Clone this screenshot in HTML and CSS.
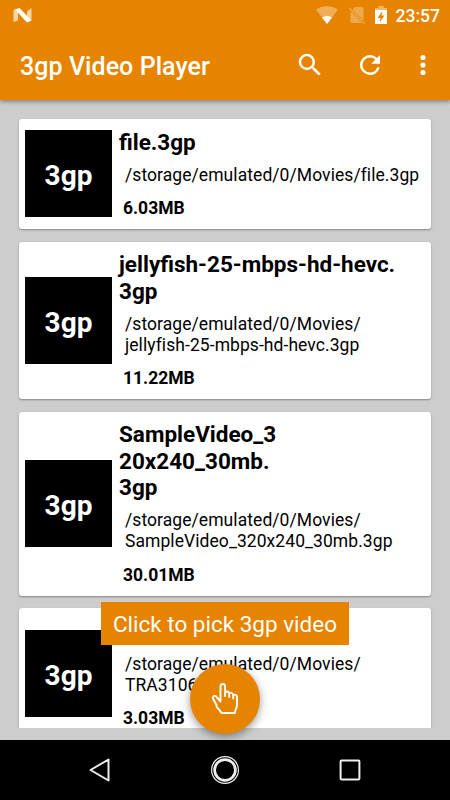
FILE: index.html
```html
<!DOCTYPE html>
<html lang="en">
<head>
<meta charset="utf-8">
<title>3gp Video Player</title>
<link rel="stylesheet" href="styles.css">
</head>
<body>
<div class="screen">
  <header class="header">
    <div class="status">
      <svg class="status-logo" width="20" height="16" viewBox="0 0 20 16"><path d="M.5 2 5 .5V12.5L.5 14zM14 3.500 18.500 0V12.500L14 14z" fill="#fff" opacity=".65"/><path d="M2 1.500 6.500 0 18.500 12.500 14 14.500z" fill="#fff"/></svg>
      <div class="status-icons">
        <svg width="22" height="18" viewBox="0 0 22 18"><path d="M11 18 0 3.500Q11-3.500 22 3.500z" fill="#fff" opacity=".35"/><path d="M11 18 6 11.500Q11 8.500 16 11.500z" fill="#fff"/></svg>
        <svg class="sim" width="16" height="18" viewBox="0 0 16 18"><path d="M6 1H13Q14.500 1 14.500 2.500V14.500L3.500 3.500zM1.500 5 13 17H3Q1.500 17 1.500 15.500z" fill="#fff" opacity=".3"/><path d="M.3 2 15.500 17.500" stroke="#fff" stroke-width="1.200" opacity=".35"/></svg>
        <svg class="battery" width="12" height="18" viewBox="0 0 12 18"><path d="M0 4V2H3.500V0H8.500V2H12V4z" fill="#fff" opacity=".4"/><path fill-rule="evenodd" d="M0 4H12V18H0zM7.500 5 2.500 12H5.500L4.500 16.500 9.500 9.500H6.500z" fill="#fff"/></svg>
        <span class="clock">23:57</span>
      </div>
    </div>
    <div class="toolbar">
      <h1 class="title">3gp Video Player</h1>
      <svg class="search" width="30" height="30" viewBox="0 0 24 24" fill="#fff"><path d="M15.500 14h-.79l-.28-.27A6.470 6.470 0 0 0 16 9.500 6.500 6.500 0 1 0 9.500 16c1.610 0 3.090-.59 4.230-1.570l.27.28v.79l5 4.990L20.490 19l-4.990-5zm-6 0C7.010 14 5 11.990 5 9.500S7.010 5 9.500 5 14 7.010 14 9.500 11.990 14 9.500 14z"/></svg>
      <svg class="refresh" width="30" height="30" viewBox="0 0 24 24" fill="#fff"><path d="M17.650 6.350A7.958 7.958 0 0 0 12 4a8 8 0 1 0 7.730 10h-2.080A5.990 5.990 0 0 1 12 18a6 6 0 1 1 0-12c1.660 0 3.140.69 4.220 1.780L13 11h7V4l-2.350 2.350z"/></svg>
      <svg class="more" width="30" height="30" viewBox="0 0 24 24" fill="#fff"><circle cx="12" cy="6" r="2.050"/><circle cx="12" cy="12" r="2.050"/><circle cx="12" cy="18" r="2.050"/></svg>
    </div>
  </header>
  <main class="list">
    <article class="card">
      <div class="thumb">3gp</div>
      <div class="info"><h2 class="name">file.3gp</h2><p class="path">/storage/emulated/0/Movies/file.3gp</p><p class="size">6.03MB</p></div>
    </article>
    <article class="card">
      <div class="thumb">3gp</div>
      <div class="info"><h2 class="name">jellyfish-25-mbps-hd-hevc.<br>3gp</h2><p class="path">/storage/emulated/0/Movies/<br>jellyfish-25-mbps-hd-hevc.3gp</p><p class="size">11.22MB</p></div>
    </article>
    <article class="card">
      <div class="thumb">3gp</div>
      <div class="info"><h2 class="name">SampleVideo_3<br>20x240_30mb.<br>3gp</h2><p class="path">/storage/emulated/0/Movies/<br>SampleVideo_320x240_30mb.3gp</p><p class="size">30.01MB</p></div>
    </article>
    <article class="card">
      <div class="thumb">3gp</div>
      <div class="info"><h2 class="name"></h2><p class="path">/storage/emulated/0/Movies/<br>TRA3106</p><p class="size">3.03MB</p></div>
    </article>
  </main>
  <div class="hint">Click to pick 3gp video</div>
  <button class="fab" aria-label="Pick video">
    <svg width="28" height="34" viewBox="0 0 28 34" fill="none" stroke="#fff" stroke-width="1.900" stroke-linejoin="round" stroke-linecap="round"><path d="M8.500 19V4.500Q8.500 2 10.800 2T13.100 4.500V14V11Q13.100 9.500 15 9.500T17.200 11.500V15V12.500Q17.200 10.800 19 10.900T21.200 13V16.500V14Q21.300 12.500 23 12.600T25 14.500V22.500Q25 25.500 23.500 28L22.800 31H9.500Q8 28.500 6 26.500T4.500 23L1 16.500Q.5 14.500 2.200 14T5 15.500L8.500 19.500"/></svg>
  </button>
  <nav class="nav">
    <svg width="24" height="28" viewBox="0 0 24 28" fill="none" stroke="#eee" stroke-width="2"><path d="M2.500 14 20.500 3.500V24.500z" stroke-linejoin="round"/></svg>
    <svg width="30" height="30" viewBox="0 0 30 30" fill="none" stroke="#eee"><circle cx="15" cy="15" r="13.400" stroke-width="1.200"/><circle cx="15" cy="15" r="10.400" stroke-width="2.700"/></svg>
    <svg width="24" height="24" viewBox="0 0 24 24" fill="none" stroke="#eee" stroke-width="2"><rect x="2.600" y="2.600" width="18.800" height="18.800" rx=".8"/></svg>
  </nav>
</div>
</body>
</html>
```

FILE: styles.css
```css
* { box-sizing: border-box; }
body { margin: 0; font-family: Roboto, sans-serif; color: #000; }
h1, h2, p { margin: 0; }
svg { display: block; flex: none; }
.screen {
  position: relative;
  width: 450px;
  height: 800px;
  display: flex;
  flex-direction: column;
  overflow: hidden;
  background: #cdcdcd;
}
.header {
  height: 100px;
  flex: none;
  background: #e68400;
  color: #fff;
  box-shadow: 0 2px 4px rgba(0, 0, 0, .35);
}
.status {
  height: 30px;
  display: flex;
  justify-content: space-between;
  padding: 0 10px 0 13px;
}
.status-logo { margin-top: 8px; }
.status-icons { display: flex; padding-top: 6px; }
.sim { margin-left: 11px; }
.battery { margin-left: 10px; }
.clock { margin-left: 9px; font-size: 17.500px; line-height: 20px; font-weight: 500; }
.toolbar { height: 70px; display: flex; align-items: center; padding: 0 12px 0 20px; }
.title { flex: 1; font-size: 25px; line-height: 30px; font-weight: 500; letter-spacing: .06px; padding-top: 3px; }
.search { margin-right: 30px; }
.refresh { margin-right: 23px; }
.list {
  height: 627.500px;
  flex: none;
  display: flex;
  flex-direction: column;
  gap: 12.700px;
  padding: 19px 19px 0;
  overflow: hidden;
}
.card {
  flex: none;
  display: flex;
  align-items: center;
  padding: 9.700px 6px 10.200px;
  border-radius: 3px;
  background: #fff;
  box-shadow: 0 1px 2px rgba(0, 0, 0, .35);
}
.thumb {
  width: 87px;
  height: 87px;
  flex: none;
  background: #000;
  color: #fff;
  font-size: 28px;
  font-weight: 700;
  line-height: 91px;
  text-align: center;
}
.info { padding-left: 7px; white-space: nowrap; }
.name { min-height: 26.500px; font-size: 22.500px; line-height: 26.500px; font-weight: 700; }
.path { font-size: 17.500px; line-height: 20.900px; letter-spacing: .07px; margin: 9.500px 0 12.700px; padding-left: 6px; }
.size { font-size: 17.500px; line-height: 20.500px; font-weight: 700; padding-left: 4px; }
.hint {
  position: absolute;
  left: 101px;
  top: 602px;
  width: 248px;
  height: 43px;
  background: #e68400;
  color: #fff;
  font-size: 22.500px;
  line-height: 45px;
  text-align: center;
  white-space: nowrap;
}
.fab {
  position: absolute;
  left: 190px;
  top: 664px;
  width: 70px;
  height: 70px;
  display: flex;
  align-items: center;
  justify-content: center;
  border: 0;
  padding: 0 0 0 2px;
  border-radius: 50%;
  background: #e68400;
  box-shadow: 0 3px 8px rgba(0, 0, 0, .4);
}
.nav {
  position: relative;
  height: 60px;
  margin-top: auto;
  display: flex;
  align-items: center;
  justify-content: space-between;
  padding: 0 88px;
  background: #000;
}
```
